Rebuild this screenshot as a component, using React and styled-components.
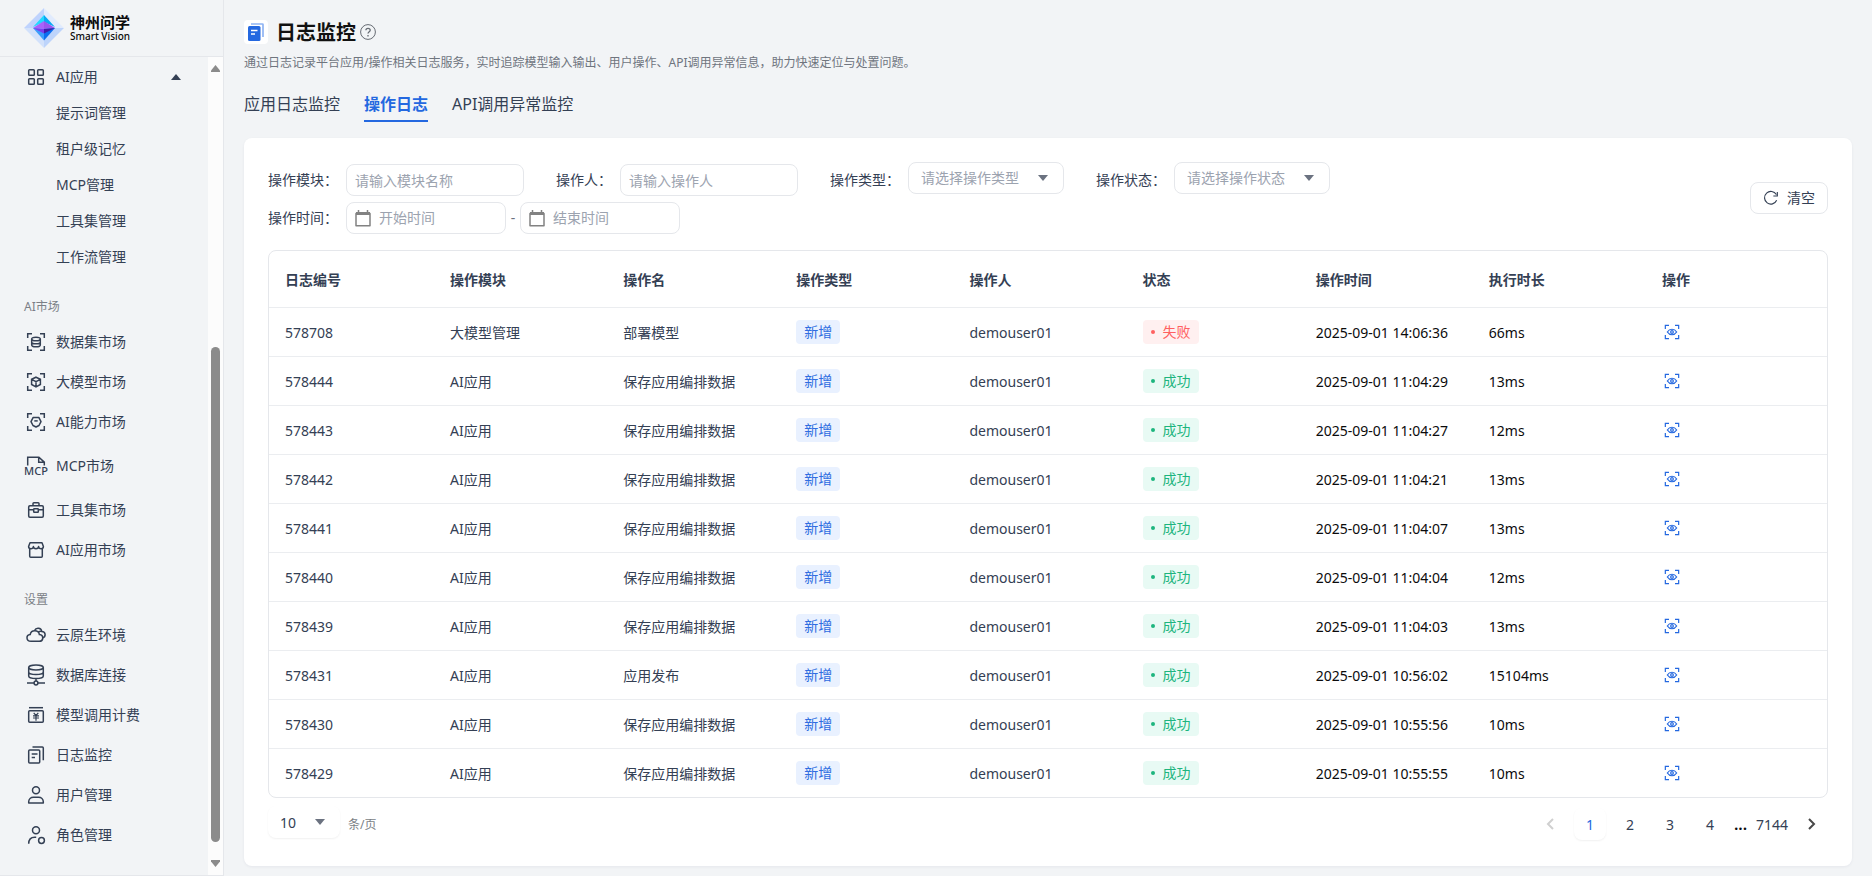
import React, { useState } from "react";
import styled, { createGlobalStyle } from "styled-components";

const GlobalStyle = createGlobalStyle`
  * {
    box-sizing: border-box;
  }

  body {
    margin: 0;
    background: #f2f4f6;
    color: #344054;
    font-family: "Noto Sans", "Noto Sans CJK SC", sans-serif;
    font-size: 14px;
    line-height: 20px;
  }

  button,
  input,
  select {
    font: inherit;
    color: inherit;
  }

  a {
    color: inherit;
    text-decoration: none;
  }
`;

const Layout = styled.div`
  display: flex;
  min-height: 100vh;
`;

const Sidebar = styled.aside`
  flex: 0 0 224px;
  display: flex;
  flex-direction: column;
  border: solid #e5e7eb;
  border-width: 0 1px 1px 0;
  border-top-left-radius: 8px;
`;

const Brand = styled.div`
  display: flex;
  align-items: center;
  gap: 6px;
  height: 57px;
  padding: 0 24px 1px;
  border-bottom: 1px solid #e5e7eb;
`;

const BrandName = styled.div`
  display: flex;
  flex-direction: column;
  color: #0b0b0c;

  strong {
    font-size: 15px;
    font-weight: 700;
    line-height: 16px;
  }

  span {
    font-size: 10px;
    font-weight: 500;
    line-height: 12px;
  }
`;

const SidebarBody = styled.div`
  flex: 1;
  display: flex;
`;

const Menu = styled.nav`
  flex: 1;
  padding: 2px 0 20px;
`;

const MenuToggle = styled.button`
  width: 100%;
  height: 36px;
  display: flex;
  align-items: center;
  gap: 8px;
  padding: 0 27px 0 24px;
  border: 0;
  background: none;
  text-align: left;
  cursor: pointer;

  span {
    flex: 1;
  }
`;

const SubMenu = styled.div`
  padding-bottom: 2px;

  a {
    display: block;
    padding-left: 56px;
    line-height: 36px;
  }
`;

const MenuLabel = styled.div`
  padding: 20px 24px 5px;
  color: #7b7f86;
  font-size: 12px;
`;

const MenuItem = styled.a`
  height: ${(props) => (props.$tall ? "48px" : "40px")};
  display: flex;
  align-items: center;
  gap: 8px;
  padding-left: 24px;
`;

const ScrollTrack = styled.div`
  width: 15px;
  display: flex;
  flex-direction: column;
  align-items: center;
  padding: 8px 0;
  background: #fcfcfc;
`;

const ScrollSpace = styled.div`
  flex: ${(props) => props.$grow};
`;

const ScrollThumb = styled.div`
  flex: 494;
  width: 9px;
  border-radius: 5px;
  background: #8b8b8b;
`;

const Main = styled.main`
  flex: 1;
  min-width: 0;
  display: flex;
  flex-direction: column;
  padding: 20px 20px 10px;
`;

const TitleRow = styled.div`
  display: flex;
  align-items: center;
  height: 24px;

  h1 {
    margin: 0 4px 0 8px;
    padding-top: 2px;
    color: #111;
    font-size: 20px;
    font-weight: 700;
    line-height: 24px;
  }
`;

const TitleIcon = styled.span`
  width: 24px;
  height: 24px;
  display: flex;
  align-items: center;
  justify-content: center;
  border-radius: 4px;
  background: #fff;
`;

const Description = styled.p`
  margin: 9px 0 19px;
  color: #6f757e;
  font-size: 12px;
`;

const Tabs = styled.div`
  display: flex;
  gap: 24px;
`;

const Tab = styled.button`
  padding: 0 0 4px;
  border: 0;
  border-bottom: 2px solid ${(props) => (props.$active ? "#2468e0" : "transparent")};
  background: none;
  color: ${(props) => (props.$active ? "#2468e0" : "#344054")};
  font-size: 16px;
  font-weight: ${(props) => (props.$active ? 700 : 400)};
  line-height: 24px;
  cursor: pointer;
`;

const Card = styled.section`
  flex: 1;
  margin-top: 16px;
  padding: 24px;
  border-radius: 8px;
  background: #fff;
  box-shadow: 0 1px 3px rgba(30, 40, 90, 0.06);
`;

const Toolbar = styled.div`
  display: flex;
  align-items: center;
  justify-content: space-between;
  margin-bottom: 16px;
`;

const Filters = styled.div`
  display: flex;
  flex-direction: column;
  gap: 6px;
`;

const FilterRow = styled.div`
  display: flex;
  gap: 32px;
`;

const Field = styled.div`
  display: flex;
  align-items: flex-end;
  gap: 8px;

  label {
    line-height: 32px;
  }
`;

const TextInput = styled.input`
  width: 178px;
  height: 32px;
  padding: 0 8px;
  border: 1px solid #e5e7eb;
  border-radius: 8px;
  background: #fff;
  outline: none;

  &::placeholder {
    color: #9ca3af;
    opacity: 1;
  }
`;

const SelectBox = styled.div`
  position: relative;
  align-self: flex-start;
  padding-bottom: ${(props) => (props.$plain ? 0 : "2px")};

  select {
    display: block;
    width: ${(props) => (props.$plain ? "72px" : "156px")};
    height: 32px;
    padding: ${(props) => (props.$plain ? "2px 11px 0" : "0 12px")};
    border: 1px solid ${(props) => (props.$plain ? "transparent" : "#e5e7eb")};
    border-radius: 8px;
    background: #fff;
    color: ${(props) => (props.$plain ? "#344054" : "#9ca3af")};
    box-shadow: ${(props) =>
      props.$plain ? "0 1px 2px rgba(0, 0, 0, 0.06)" : "none"};
    appearance: none;
    outline: none;
  }

  svg {
    position: absolute;
    top: 13px;
    right: ${(props) => (props.$plain ? "15px" : "16px")};
    pointer-events: none;
  }
`;

const DateRange = styled.div`
  display: flex;
  align-items: center;
  color: #6b7280;
`;

const Dash = styled.span`
  width: 14px;
  text-align: center;
`;

const DateBox = styled.div`
  width: 160px;
  height: 32px;
  display: flex;
  align-items: center;
  gap: 8px;
  padding: 0 8px;
  border: 1px solid #e5e7eb;
  border-radius: 8px;

  svg {
    flex: none;
  }

  input {
    width: 100%;
    min-width: 0;
    padding: 0;
    border: 0;
    outline: none;
    background: none;
  }

  input::placeholder {
    color: #9ca3af;
    opacity: 1;
  }
`;

const ClearButton = styled.button`
  width: 78px;
  height: 32px;
  display: flex;
  align-items: center;
  justify-content: center;
  gap: 8px;
  padding: 0;
  border: 1px solid #e5e7eb;
  border-radius: 8px;
  background: #fff;
  cursor: pointer;
`;

const TableWrapper = styled.div`
  overflow: hidden;
  border: 1px solid #e5e7eb;
  border-radius: 8px;
`;

const LogTable = styled.table`
  width: 100%;
  border-spacing: 0;
  table-layout: fixed;

  th,
  td {
    padding: 2px 16px 0;
    border-bottom: 1px solid #ebedf0;
    text-align: left;
  }

  th {
    height: 57px;
    font-weight: 700;
  }

  th:first-child {
    width: 165px;
  }

  th:last-child {
    width: 181px;
  }

  td {
    height: 49px;
  }

  tbody tr:last-child td {
    height: 48px;
    border-bottom: 0;
  }

  .flush {
    padding-top: 0;
  }

  .dark {
    color: #0b0b0c;
  }
`;

const tones = {
  blue: { color: "#2f6de1", background: "#e9f1ff" },
  red: { color: "#ff6060", background: "#fff0f0" },
  green: { color: "#1db57e", background: "#e8faf4" }
};

const Tag = styled.span`
  height: 24px;
  display: inline-flex;
  align-items: center;
  gap: 8px;
  padding: 0 8px;
  border-radius: 4px;
  vertical-align: middle;
  color: ${(props) => tones[props.$tone].color};
  background: ${(props) => tones[props.$tone].background};
`;

const Dot = styled.i`
  width: 4px;
  height: 4px;
  border-radius: 50%;
  background: currentColor;
`;

const ViewButton = styled.button`
  display: block;
  padding: 0 2px;
  border: 0;
  background: none;
  color: #2468e0;
  cursor: pointer;

  svg {
    display: block;
  }
`;

const Footer = styled.div`
  height: 34px;
  display: flex;
  justify-content: space-between;
  margin-top: 8px;
`;

const PageSize = styled.div`
  display: flex;
  align-items: center;
  gap: 8px;

  label {
    padding-top: 3px;
    color: #7b7f86;
    font-size: 12px;
  }
`;

const Pager = styled.nav`
  display: flex;
  align-items: flex-end;
  gap: 8px;

  span {
    width: 14px;
    color: #0b0b0c;
    font-size: 16px;
    font-weight: 600;
    line-height: 32px;
  }
`;

const PageButton = styled.button`
  min-width: 32px;
  height: 32px;
  display: flex;
  align-items: center;
  justify-content: center;
  padding: ${(props) => (props.$arrow ? 0 : "2px 0 0")};
  border: 0;
  border-radius: 8px;
  background: #fff;
  color: ${(props) => (props.$active ? "#2468e0" : "#344054")};
  box-shadow: ${(props) =>
    props.$active ? "0 1px 2px rgba(0, 0, 0, 0.06)" : "none"};
  cursor: pointer;
`;

const Icon = ({ size = 24, width = 1.5, children }) => (
  <svg
    width={size}
    height={size}
    viewBox="0 0 24 24"
    fill="none"
    stroke="currentColor"
    strokeWidth={width}
    aria-hidden="true"
  >
    {children}
  </svg>
);

const Corners = () => (
  <path d="M3.7 8V3.7H8M16 3.7h4.3V8M20.3 16v4.3H16M8 20.3H3.7V16" />
);

const Caret = ({ up, color = "#6b7280" }) => (
  <svg width="10" height="6" viewBox="0 0 10 6" fill={color} aria-hidden="true">
    <path d={up ? "M0 6 5 0l5 6z" : "M0 0h10L5 6z"} />
  </svg>
);

const icons = {
  apps: (
    <>
      <rect x="4.7" y="4.7" width="5.6" height="5.6" rx="0.8" />
      <rect x="13.7" y="4.7" width="5.6" height="5.6" rx="0.8" />
      <rect x="4.7" y="13.7" width="5.6" height="5.6" rx="0.8" />
      <rect x="13.7" y="13.7" width="5.6" height="5.6" rx="0.8" />
    </>
  ),
  dataset: (
    <>
      <Corners />
      <ellipse cx="12" cy="9" rx="4.3" ry="1.8" />
      <path d="M7.7 9v6c0 1 1.9 1.8 4.3 1.8s4.3-.8 4.3-1.8V9M7.7 12c0 1 1.9 1.8 4.3 1.8s4.3-.8 4.3-1.8" />
    </>
  ),
  model: (
    <>
      <Corners />
      <path d="m12 7.2 4.4 2.1v5.2L12 16.8l-4.4-2.3V9.3zM7.6 9.4l4.4 2.2 4.4-2.2M12 11.6v5" />
    </>
  ),
  ability: (
    <>
      <Corners />
      <path d="M9.2 7.4h5.6l2.200 4.200-2 3.900-3 1.500-3-1.500-2-3.900z" strokeLinejoin="round" />
      <path d="M10.300 10.900h3.400" />
    </>
  ),
  mcp: (
    <>
      <path d="M3.700 11.500V3.200h11.200l5.400 5v3.300M14.700 3.200v5h5.400" />
      <text
        x="12"
        y="21"
        textAnchor="middle"
        fontSize="11"
        fontWeight="500"
        fill="currentColor"
        stroke="none"
      >
        MCP
      </text>
    </>
  ),
  toolbox: (
    <>
      <rect x="4.700" y="7.700" width="14.600" height="11.600" rx="1.200" />
      <path d="M9 7.500V5.600c0-.5.400-.9.900-.9h4.200c.5 0 .9.400.9.900v1.900M4.700 11.700h4.800M14.500 11.700h4.800" />
      <rect x="9.700" y="10.700" width="4.600" height="3.600" rx="0.600" />
    </>
  ),
  shop: (
    <>
      <path d="M5.700 10.500v7.800c0 .6.400 1 1 1h10.600c.6 0 1-.4 1-1v-7.800" />
      <path
        d="M6 4.700h12l1.400 3.800c0 1.300-1 2.200-2.200 2.200-1.300 0-2.500-.9-2.600-2.200 0 1.300-1.200 2.200-2.600 2.200s-2.600-.9-2.600-2.200c-.1 1.300-1.300 2.200-2.600 2.200-1.200 0-2.200-.9-2.200-2.200z"
        strokeLinejoin="round"
      />
    </>
  ),
  cloud: (
    <>
      <path d="M7 18.300c-5.200 0-5.200-6.400-.8-6.800.9-5 8.400-5 9.200.100 4.600.500 4.300 6.700-.2 6.700z" />
      <path d="M10.500 7.500c1.600-3.300 6.600-2.800 7.300.900 4 .1 4.600 5.600.6 6.600M14 9.400c1-.9 2.400-1.200 3.700-.9" />
    </>
  ),
  database: (
    <>
      <ellipse cx="12" cy="4.500" rx="7.300" ry="2.500" />
      <path d="M4.700 4.500v8.600c0 1.400 3.300 2.500 7.300 2.500s7.300-1.100 7.300-2.500V4.500M4.700 9c0 1.400 3.300 2.500 7.300 2.500s7.300-1.100 7.300-2.500M12 15.500v2.500M3 20h7M14 20h7" />
      <circle cx="12" cy="20" r="1.900" />
    </>
  ),
  billing: (
    <>
      <path d="M5 4.700h14" />
      <rect x="4.700" y="7.700" width="14.600" height="11.600" rx="1" />
      <path d="m9.700 9.800 2.300 2.700 2.300-2.700M9 12.800h6M9 15h6M12 12.500v5.300" strokeWidth="1.200" />
    </>
  ),
  logs: (
    <>
      <rect x="4.700" y="7" width="11" height="13" rx="1" />
      <path d="M8.500 3.900h9.800c.6 0 1 .4 1 1v12.300M7.700 11h5.800M7.700 14.500h3.300" />
    </>
  ),
  user: (
    <>
      <circle cx="12" cy="7.300" r="3.500" />
      <path d="M4.700 20v-1.200c0-2.800 2.100-4.600 4.800-4.600h5c2.700 0 4.800 1.800 4.800 4.600V20z" strokeLinejoin="round" />
    </>
  ),
  role: (
    <>
      <circle cx="12" cy="7.300" r="3.500" />
      <path d="M4.700 20.700c0-4.200 2-6.500 6-6.500h1.500" />
      <circle cx="17.500" cy="17.500" r="2.900" />
    </>
  )
};

const Logo = () => (
  <svg width="40" height="40" viewBox="0 0 40 40" aria-hidden="true">
    <path d="M20 0 0 20h20z" fill="#bfd3fd" />
    <path d="m20 0 20 20H20z" fill="#e1ebfd" />
    <path d="m0 20 20 20V20z" fill="#d2e1fb" />
    <path d="M40 20 20 40V20z" fill="#bdd4fb" />
    <path d="M20 7 9 19l11-5z" fill="#22d8ff" />
    <path d="m20 7 11 12-11-5z" fill="#08a8f5" />
    <path d="m9 20 11-7v8z" fill="#a862fb" />
    <path d="m31 20-11-7v8z" fill="#9a55ee" />
    <path d="m9 20 11 12.500V21z" fill="#3d9dfb" />
    <path d="M31 20 20 32.500V21z" fill="#0b6ff0" />
    <path d="m31 20-11 1v4.500z" fill="#3e1cab" />
    <path d="m9 20 11 1v4.500z" fill="#7b3df0" />
  </svg>
);

const Calendar = () => (
  <svg width="16" height="17" viewBox="0 0 16 17" fill="none" stroke="#828282" aria-hidden="true">
    <path d="M1 3.500h14v12.300H1z" strokeWidth="1.500" strokeLinejoin="round" />
    <path d="M1 3.500h14" strokeWidth="3" />
    <path d="M3.500 0v4M12.500 0v4" strokeWidth="1.500" />
  </svg>
);

const subMenu = ["提示词管理", "租户级记忆", "MCP管理", "工具集管理", "工作流管理"];

const groups = [
  {
    title: "AI市场",
    items: [
      ["数据集市场", "dataset"],
      ["大模型市场", "model"],
      ["AI能力市场", "ability"],
      ["MCP市场", "mcp"],
      ["工具集市场", "toolbox"],
      ["AI应用市场", "shop"]
    ]
  },
  {
    title: "设置",
    items: [
      ["云原生环境", "cloud"],
      ["数据库连接", "database"],
      ["模型调用计费", "billing"],
      ["日志监控", "logs"],
      ["用户管理", "user"],
      ["角色管理", "role"]
    ]
  }
];

const tabs = ["应用日志监控", "操作日志", "API调用异常监控"];

const columns = [
  "日志编号",
  "操作模块",
  "操作名",
  "操作类型",
  "操作人",
  "状态",
  "操作时间",
  "执行时长",
  "操作"
];

const logs = [
  ["578708", "大模型管理", "部署模型", false, "14:06:36", "66ms"],
  ["578444", "AI应用", "保存应用编排数据", true, "11:04:29", "13ms"],
  ["578443", "AI应用", "保存应用编排数据", true, "11:04:27", "12ms"],
  ["578442", "AI应用", "保存应用编排数据", true, "11:04:21", "13ms"],
  ["578441", "AI应用", "保存应用编排数据", true, "11:04:07", "13ms"],
  ["578440", "AI应用", "保存应用编排数据", true, "11:04:04", "12ms"],
  ["578439", "AI应用", "保存应用编排数据", true, "11:04:03", "13ms"],
  ["578431", "AI应用", "应用发布", true, "10:56:02", "15104ms"],
  ["578430", "AI应用", "保存应用编排数据", true, "10:55:56", "10ms"],
  ["578429", "AI应用", "保存应用编排数据", true, "10:55:55", "10ms"]
];

const SideNav = () => {
  const [open, setOpen] = useState(true);

  return (
    <Sidebar>
      <Brand>
        <Logo />
        <BrandName>
          <strong>神州问学</strong>
          <span>Smart Vision</span>
        </BrandName>
      </Brand>
      <SidebarBody>
        <Menu>
          <MenuToggle type="button" aria-expanded={open} onClick={() => setOpen(!open)}>
            <Icon>{icons.apps}</Icon>
            <span>AI应用</span>
            <Caret up={open} color="#344054" />
          </MenuToggle>
          {open ? (
            <SubMenu>
              {subMenu.map((name) => (
                <a href="#" key={name}>
                  {name}
                </a>
              ))}
            </SubMenu>
          ) : null}
          {groups.map((group) => (
            <div key={group.title}>
              <MenuLabel>{group.title}</MenuLabel>
              {group.items.map(([name, icon]) => (
                <MenuItem href="#" key={name} $tall={icon === "mcp"}>
                  <Icon>{icons[icon]}</Icon>
                  {name}
                </MenuItem>
              ))}
            </div>
          ))}
        </Menu>
        <ScrollTrack>
          <svg width="9" height="7" viewBox="0 0 9 7" fill="#8b8b8b">
            <path d="M4.500 0 9 5.500V7H0V5.500z" />
          </svg>
          <ScrollSpace $grow={275} />
          <ScrollThumb />
          <ScrollSpace $grow={18} />
          <svg width="9" height="7" viewBox="0 0 9 7" fill="#8b8b8b">
            <path d="M4.500 7 9 1.500V0H0v1.500z" />
          </svg>
        </ScrollTrack>
      </SidebarBody>
    </Sidebar>
  );
};

const FilterSelect = ({ id, label, placeholder }) => (
  <Field>
    <label htmlFor={id}>{label}：</label>
    <SelectBox>
      <select id={id} defaultValue="">
        <option value="">{placeholder}</option>
      </select>
      <Caret />
    </SelectBox>
  </Field>
);

const FilterBar = () => (
  <Toolbar>
    <Filters>
      <FilterRow>
        <Field>
          <label htmlFor="module">操作模块：</label>
          <TextInput id="module" placeholder="请输入模块名称" />
        </Field>
        <Field>
          <label htmlFor="operator">操作人：</label>
          <TextInput id="operator" placeholder="请输入操作人" />
        </Field>
        <FilterSelect id="type" label="操作类型" placeholder="请选择操作类型" />
        <FilterSelect id="status" label="操作状态" placeholder="请选择操作状态" />
      </FilterRow>
      <Field>
        <label htmlFor="start">操作时间：</label>
        <DateRange>
          <DateBox>
            <Calendar />
            <input id="start" placeholder="开始时间" />
          </DateBox>
          <Dash>-</Dash>
          <DateBox>
            <Calendar />
            <input id="end" aria-label="结束时间" placeholder="结束时间" />
          </DateBox>
        </DateRange>
      </Field>
    </Filters>
    <ClearButton type="button">
      <Icon size={16} width={1.700}>
        <path d="M20.500 15.500A9.500 9.500 0 1 1 20 6.800M21.500 3v6h-6" />
      </Icon>
      清空
    </ClearButton>
  </Toolbar>
);

const Logs = () => (
  <TableWrapper>
    <LogTable>
      <thead>
        <tr>
          {columns.map((name) => (
            <th key={name}>{name}</th>
          ))}
        </tr>
      </thead>
      <tbody>
        {logs.map(([id, module, name, ok, time, cost]) => (
          <tr key={id}>
            <td>{id}</td>
            <td>{module}</td>
            <td>{name}</td>
            <td className="flush">
              <Tag $tone="blue">新增</Tag>
            </td>
            <td>demouser01</td>
            <td className="flush">
              <Tag $tone={ok ? "green" : "red"}>
                <Dot />
                {ok ? "成功" : "失败"}
              </Tag>
            </td>
            <td className="dark">2025-09-01 {time}</td>
            <td className="dark">{cost}</td>
            <td className="flush">
              <ViewButton type="button" aria-label="查看">
                <Icon size={16} width={1.800}>
                  <path d="M2 7.500V2h5.500M16.500 2H22v5.500M22 16.500V22h-5.500M7.500 22H2v-5.500" />
                  <path d="M5 12c3.500-5.500 10.500-5.500 14 0-3.500 5.500-10.500 5.500-14 0z" />
                  <circle cx="12" cy="12" r="2" />
                </Icon>
              </ViewButton>
            </td>
          </tr>
        ))}
      </tbody>
    </LogTable>
  </TableWrapper>
);

const Pagination = () => {
  const [page, setPage] = useState(1);

  return (
    <Footer>
      <PageSize>
        <SelectBox $plain>
          <select id="pageSize" defaultValue="10">
            <option>10</option>
            <option>20</option>
            <option>50</option>
          </select>
          <Caret />
        </SelectBox>
        <label htmlFor="pageSize">条/页</label>
      </PageSize>
      <Pager>
        <PageButton
          type="button"
          aria-label="上一页"
          $arrow
          disabled={page === 1}
          onClick={() => setPage(page - 1)}
        >
          <svg width="8" height="12" viewBox="0 0 8 12" fill="none" stroke="#d0d0d0" strokeWidth="2">
            <path d="M7 1 2 6l5 5" />
          </svg>
        </PageButton>
        {[1, 2, 3, 4].map((n) => (
          <PageButton type="button" key={n} $active={n === page} onClick={() => setPage(n)}>
            {n}
          </PageButton>
        ))}
        <span>...</span>
        <PageButton type="button" onClick={() => setPage(7144)}>
          7144
        </PageButton>
        <PageButton type="button" aria-label="下一页" $arrow onClick={() => setPage(page + 1)}>
          <svg width="8" height="12" viewBox="0 0 8 12" fill="none" stroke="#484848" strokeWidth="2">
            <path d="m1 1 5 5-5 5" />
          </svg>
        </PageButton>
      </Pager>
    </Footer>
  );
};

export default function App() {
  const [tab, setTab] = useState("操作日志");

  return (
    <Layout>
      <GlobalStyle />
      <SideNav />
      <Main>
        <TitleRow>
          <TitleIcon>
            <svg width="16" height="18" viewBox="0 0 16 18" fill="none">
              <path d="M3 1h11.500c.3 0 .5.200.5.500V14" stroke="#8fb4f4" strokeWidth="1.700" />
              <rect y="3" width="12.500" height="15" rx="1.500" fill="#2468e0" />
              <path d="M3 7.500h6.500M3 11h4" stroke="#fff" strokeWidth="1.500" />
            </svg>
          </TitleIcon>
          <h1>日志监控</h1>
          <svg width="16" height="16" viewBox="0 0 16 16" fill="none" stroke="#666b73">
            <circle cx="8" cy="8" r="7.400" />
            <path d="M5.900 6.300c0-2.700 4.300-2.700 4.300 0C10.200 7.700 8 7.800 8 9.600M8 11v1.500" strokeWidth="1.300" />
          </svg>
        </TitleRow>
        <Description>
          通过日志记录平台应用/操作相关日志服务，实时追踪模型输入输出、用户操作、API调用异常信息，助力快速定位与处置问题。
        </Description>
        <Tabs>
          {tabs.map((name) => (
            <Tab type="button" key={name} $active={name === tab} onClick={() => setTab(name)}>
              {name}
            </Tab>
          ))}
        </Tabs>
        <Card>
          <FilterBar />
          <Logs />
          <Pagination />
        </Card>
      </Main>
    </Layout>
  );
}
